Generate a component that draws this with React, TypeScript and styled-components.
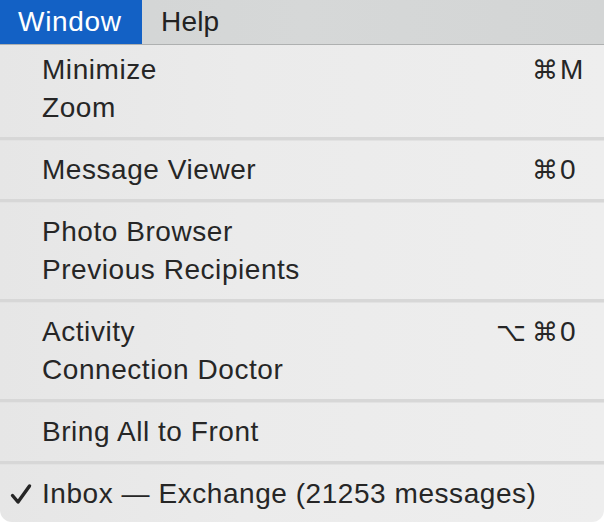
import React from 'react';
import styled, { createGlobalStyle } from 'styled-components';

const GlobalStyle = createGlobalStyle`
  html, body {
    margin: 0;
    padding: 0;
    background: #ffffff;
  }
  body {
    font-family: "Liberation Sans", Arial, sans-serif;
    -webkit-font-smoothing: antialiased;
  }
`;

type Item = { label: string; mods?: string[]; keyChar?: string; checked?: boolean };

const groups: Item[][] = [
  [
    { label: 'Minimize', mods: ['⌘'], keyChar: 'M' },
    { label: 'Zoom' },
  ],
  [{ label: 'Message Viewer', mods: ['⌘'], keyChar: '0' }],
  [{ label: 'Photo Browser' }, { label: 'Previous Recipients' }],
  [
    { label: 'Activity', mods: ['⌥', '⌘'], keyChar: '0' },
    { label: 'Connection Doctor' },
  ],
  [{ label: 'Bring All to Front' }],
  [{ label: 'Inbox — Exchange (21253 messages)', checked: true }],
];

function CheckMark() {
  return (
    <svg width="22" height="22" viewBox="0 0 22 22">
      <path
        d="M2.5 12.5 L8 19 L19.5 3"
        fill="none"
        stroke="#262626"
        strokeWidth="3.4"
        strokeLinecap="round"
        strokeLinejoin="round"
      />
    </svg>
  );
}

function App() {
  return (
    <Screen>
      <GlobalStyle />
      <MenuBar>
        <BarTitle active>Window</BarTitle>
        <BarTitle>Help</BarTitle>
      </MenuBar>
      <Menu>
        {groups.map((group, gi) => (
          <React.Fragment key={gi}>
            {gi > 0 && <Separator />}
            {group.map((item) => (
              <Row key={item.label}>
                <Check>{item.checked && <CheckMark />}</Check>
                <Label>{item.label}</Label>
                {item.keyChar && (
                  <Shortcut>
                    <Mods>
                      {item.mods?.map((m) => (
                        <span key={m}>{m}</span>
                      ))}
                    </Mods>
                    <KeyChar>{item.keyChar}</KeyChar>
                  </Shortcut>
                )}
              </Row>
            ))}
          </React.Fragment>
        ))}
      </Menu>
    </Screen>
  );
}

export default App;

const Screen = styled.div`
  width: 604px;
  height: 522px;
  overflow: hidden;
  display: flex;
  flex-direction: column;
  background: #ffffff;
`;

const MenuBar = styled.div`
  height: 44px;
  flex: none;
  display: flex;
  align-items: stretch;
  background: linear-gradient(90deg, #d2d4d4 0%, #d6d8d8 50%, #d3d5d5 100%);
  border-bottom: 1px solid #aeb0b0;
`;

const BarTitle = styled.div<{ active?: boolean }>`
  display: flex;
  align-items: center;
  padding: 0 14px 0 ${(p) => (p.active ? '18px' : '19px')};
  font-size: 28px;
  letter-spacing: ${(p) => (p.active ? '0.7px' : '0.2px')};
  color: ${(p) => (p.active ? '#ffffff' : '#222222')};
  background: ${(p) => (p.active ? '#1361c5' : 'transparent')};
  width: ${(p) => (p.active ? '142px' : 'auto')};
  box-sizing: border-box;
`;

const Menu = styled.div`
  flex: 1;
  display: flex;
  flex-direction: column;
  padding-top: 6px;
  background: linear-gradient(90deg, #e6e6e6 0%, #ebebeb 40%, #eeeeee 100%);
  border-radius: 0 0 12px 12px;
`;

const Row = styled.div`
  height: 38px;
  display: flex;
  align-items: center;
  font-size: 28px;
  color: #262626;
  letter-spacing: 0.55px;
`;

const Check = styled.div`
  width: 42px;
  flex: none;
  display: flex;
  align-items: center;
  padding-left: 10px;
  box-sizing: border-box;
`;

const Label = styled.div`
  flex: 1;
  white-space: nowrap;
`;

const Shortcut = styled.div`
  display: flex;
  align-items: center;
  width: 70px;
  flex: none;
`;

const Mods = styled.div`
  width: 24px;
  flex: none;
  display: flex;
  justify-content: flex-end;
  gap: 6px;
  white-space: nowrap;
  font-family: "DejaVu Sans", "Liberation Sans", sans-serif;
  font-size: 26px;
  letter-spacing: 0;
`;

const KeyChar = styled.div`
  padding-left: 2px;
`;

const Separator = styled.div`
  height: 4px;
  margin: 10px 0;
  background: #d7d7d7;
  border-bottom: 1px solid #e2e2e2;
  box-sizing: border-box;
`;
